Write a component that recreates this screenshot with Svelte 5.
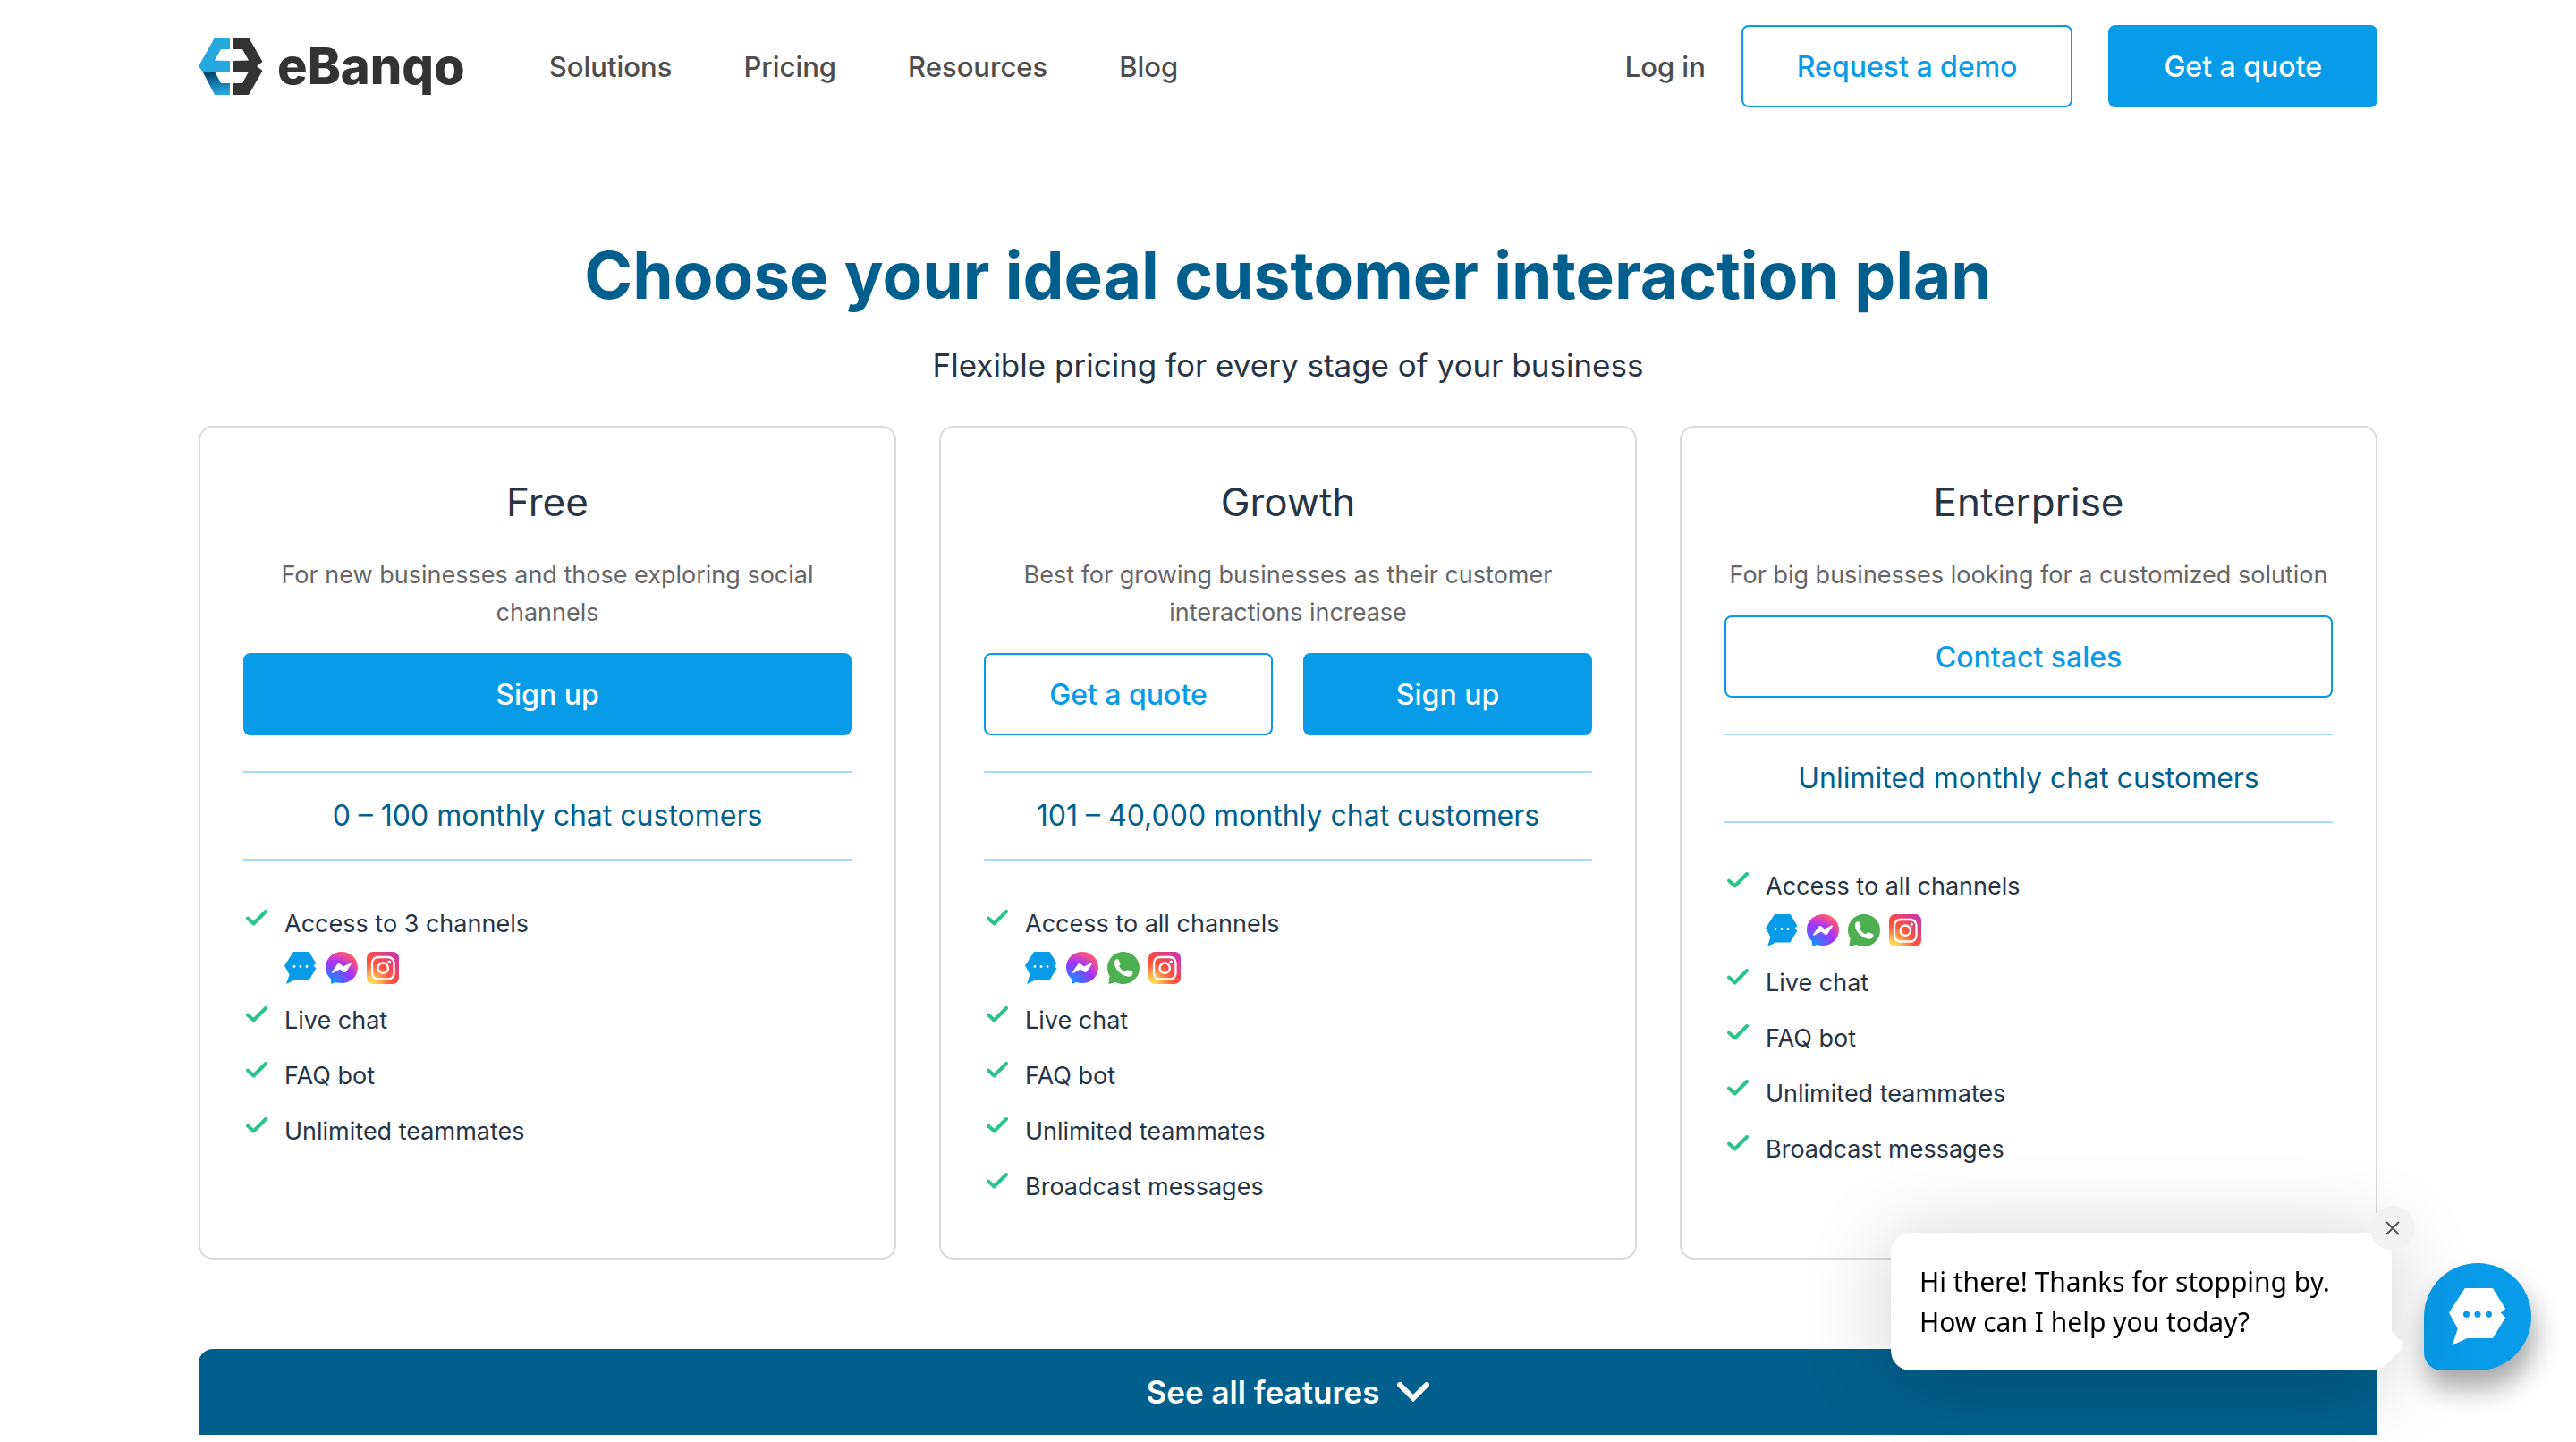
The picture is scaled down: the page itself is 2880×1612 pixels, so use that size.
<script lang="ts">
  type Channel = "chat" | "messenger" | "whatsapp" | "instagram";

  interface Action {
    label: string;
    primary: boolean;
  }

  interface Plan {
    name: string;
    summary: string;
    actions: Action[];
    customers: string;
    access: string;
    channels: Channel[];
    features: string[];
  }

  const navLinks = ["Solutions", "Pricing", "Resources", "Blog"];

  const plans: Plan[] = [
    {
      name: "Free",
      summary: "For new businesses and those exploring social channels",
      actions: [{ label: "Sign up", primary: true }],
      customers: "0 – 100 monthly chat customers",
      access: "Access to 3 channels",
      channels: ["chat", "messenger", "instagram"],
      features: ["Live chat", "FAQ bot", "Unlimited teammates"],
    },
    {
      name: "Growth",
      summary: "Best for growing businesses as their customer interactions increase",
      actions: [
        { label: "Get a quote", primary: false },
        { label: "Sign up", primary: true },
      ],
      customers: "101 – 40,000 monthly chat customers",
      access: "Access to all channels",
      channels: ["chat", "messenger", "whatsapp", "instagram"],
      features: ["Live chat", "FAQ bot", "Unlimited teammates", "Broadcast messages"],
    },
    {
      name: "Enterprise",
      summary: "For big businesses looking for a customized solution",
      actions: [{ label: "Contact sales", primary: false }],
      customers: "Unlimited monthly chat customers",
      access: "Access to all channels",
      channels: ["chat", "messenger", "whatsapp", "instagram"],
      features: ["Live chat", "FAQ bot", "Unlimited teammates", "Broadcast messages"],
    },
  ];

  let greetingOpen = $state(true);
</script>

{#snippet check()}
  <svg class="check" viewBox="0 0 24 18" aria-hidden="true">
    <path d="M2 9.5 8.5 15.5 22 2" />
  </svg>
{/snippet}

{#snippet bubble(dot: number)}
  <path
    fill="currentColor"
    d="M10 0H27.500L35.500 13 32.500 15.500 35.500 18.500 27.500 31.500H11.500L2 36 5.500 25.500 0 15.500Z"
  />
  <g class="dots">
    <circle cx="11" cy="16.500" r={dot} />
    <circle cx="18" cy="16.500" r={dot} />
    <circle cx="25" cy="16.500" r={dot} />
  </g>
{/snippet}

{#snippet channelIcon(channel: Channel)}
  <svg class="channel {channel}" viewBox="0 0 36 36" role="img" aria-label={channel}>
    {#if channel === "chat"}
      {@render bubble(1.4)}
    {:else if channel === "messenger"}
      <path
        fill="url(#messenger-fill)"
        d="M18 0C8 0 0 7.300 0 17.300c0 5.200 2.200 9.700 5.800 12.700L6.300 36l5-2c2.100.6 4.400 1 6.700 1 10 0 18-7.500 18-17.500S28 0 18 0Z"
      />
      <path
        fill="#fff"
        d="M7.200 22.500 12.800 14.200Q14.200 12.200 16.200 13.600L19.900 16.500 27.800 12.600Q29.600 12.200 28.600 14L23.300 22Q21.900 23.800 20 22.400L16 19.500 8.300 23.700Q6.500 24.200 7.200 22.500Z"
      />
    {:else if channel === "whatsapp"}
      <path
        fill="#4caf50"
        d="M18 0C8 0 0 8 0 18c0 3.400 1 6.500 2.600 9.200L1.300 36l8.200-2.100C12 35.300 14.900 36 18 36c10 0 18-8 18-18S28 0 18 0Z"
      />
      <path
        fill="#fff"
        d="M9.300 8.800Q12 7.200 13 9.500L14.400 12.700Q14.800 14 13.200 16C14.300 18.700 16.800 21.200 19.800 22.300L21.800 20.600Q22.600 20 23.700 20.500L27.500 22.100Q28.900 22.700 28.500 24.300C28 26.800 25.400 28.200 22.300 27.600 14.800 26 8.300 19 7.800 13Q7.600 10 9.300 8.800Z"
      />
    {:else}
      <rect width="36" height="36" rx="7" fill="url(#instagram-fill)" />
      <rect width="36" height="36" rx="7" fill="url(#instagram-corner)" />
      <g fill="none" stroke="#fff" stroke-width="2.300">
        <rect x="6" y="6" width="24.500" height="24.500" rx="6.500" />
        <circle cx="18.200" cy="18.200" r="5.700" />
      </g>
      <circle cx="25.300" cy="11.300" r="1.700" fill="#fff" />
    {/if}
  </svg>
{/snippet}

<!-- gradients shared by every channel icon -->
<svg class="defs" width="0" height="0" aria-hidden="true">
  <defs>
    <radialGradient id="messenger-fill" cx="0.190" cy="0.990" r="1.090">
      <stop offset="0" stop-color="#0099ff" />
      <stop offset="0.600" stop-color="#a033ff" />
      <stop offset="0.930" stop-color="#ff5280" />
      <stop offset="1" stop-color="#ff7061" />
    </radialGradient>
    <radialGradient id="instagram-fill" cx="0.120" cy="1" r="1.400">
      <stop offset="0" stop-color="#ffdd55" />
      <stop offset="0.120" stop-color="#ffd055" />
      <stop offset="0.450" stop-color="#ff543e" />
      <stop offset="0.650" stop-color="#fb4a48" />
      <stop offset="1" stop-color="#c837ab" />
    </radialGradient>
    <linearGradient id="instagram-corner" x1="0.500" y1="0.500" x2="1" y2="0">
      <stop offset="0" stop-color="#c837ab" stop-opacity="0" />
      <stop offset="1" stop-color="#c837ab" />
    </linearGradient>
  </defs>
</svg>

<header class="site-header container">
  <a class="logo" href="#home">
    <svg viewBox="0 0 72 64" aria-hidden="true">
      <defs>
        <linearGradient id="logo-fold" x1="0.300" y1="0" x2="0.500" y2="1">
          <stop offset="0" stop-color="#003f66" />
          <stop offset="1" stop-color="#25a9df" />
        </linearGradient>
      </defs>
      <path fill="#25a9df" d="M18 0H35V13H25L18 25.500 35 26V38H4.500L0 32Z" />
      <path fill="url(#logo-fold)" d="M4.500 38H18L25 51H35V64H18Z" />
      <path
        fill="#333"
        d="M39 0H56L71.500 27 65 32 71.500 37 56 64H39V51H49L56 38H39V26L56 25.500 49 13H39Z"
      />
    </svg>
    <span>eBanqo</span>
  </a>
  <nav class="nav" aria-label="Main">
    {#each navLinks as link}
      <a href="#{link.toLowerCase()}">{link}</a>
    {/each}
  </nav>
  <div class="account">
    <a class="login" href="#login">Log in</a>
    <button class="btn">Request a demo</button>
    <button class="btn primary">Get a quote</button>
  </div>
</header>

<main class="container">
  <section class="intro">
    <h1>Choose your ideal customer interaction plan</h1>
    <p>Flexible pricing for every stage of your business</p>
  </section>

  <section class="plans">
    {#each plans as plan}
      <article class="plan">
        <h2>{plan.name}</h2>
        <p class="summary">{plan.summary}</p>
        <div class="actions">
          {#each plan.actions as action}
            <button class="btn" class:primary={action.primary}>{action.label}</button>
          {/each}
        </div>
        <p class="customers">{plan.customers}</p>
        <ul>
          <li>
            {@render check()}
            <div>
              {plan.access}
              <div class="channels">
                {#each plan.channels as channel}
                  {@render channelIcon(channel)}
                {/each}
              </div>
            </div>
          </li>
          {#each plan.features as feature}
            <li>{@render check()}{feature}</li>
          {/each}
        </ul>
      </article>
    {/each}
  </section>

  <button class="see-all">
    See all features
    <svg viewBox="0 0 36 22" aria-hidden="true">
      <path d="M3 3 18 18 33 3" />
    </svg>
  </button>
</main>

<aside class="chat">
  {#if greetingOpen}
    <div class="greeting">
      Hi there! Thanks for stopping by.<br />How can I help you today?
      <button class="close" aria-label="Close" onclick={() => (greetingOpen = false)}>
        <svg viewBox="0 0 16 16" aria-hidden="true"><path d="M1 1 15 15M15 1 1 15" /></svg>
      </button>
    </div>
  {/if}
  <button class="launcher" aria-label="Open chat">
    <svg viewBox="0 0 36 36" aria-hidden="true">{@render bubble(2)}</svg>
  </button>
</aside>

<style>
  :global(body) {
    margin: 0;
    background: #fff;
    color: #263445;
    font-family: Inter, "Liberation Sans", sans-serif;
    --blue: #089be7;
    --navy: #005f8c;
  }
  h1,
  h2,
  p,
  ul {
    margin: 0;
    padding: 0;
  }
  a {
    color: inherit;
    text-decoration: none;
  }
  button {
    font-family: inherit;
    cursor: pointer;
  }
  .defs {
    position: absolute;
  }
  .container {
    margin: 0 222px;
  }

  .site-header {
    display: flex;
    align-items: center;
    padding: 28px 0;
    color: #4d4d4d;
    font-size: 31px;
    font-weight: 500;
  }
  .logo {
    display: flex;
    align-items: center;
    gap: 16px;
    margin-right: 94px;
    color: #333;
    font-size: 56px;
    font-weight: 800;
    line-height: 64px;
  }
  .logo svg {
    width: 72px;
    height: 64px;
  }
  .nav {
    display: flex;
    gap: 80px;
  }
  .account {
    display: flex;
    align-items: center;
    gap: 40px;
    margin-left: auto;
  }
  .btn {
    box-sizing: border-box;
    height: 92px;
    padding: 0 60px;
    border: 2px solid var(--blue);
    border-radius: 8px;
    background: #fff;
    color: var(--blue);
    font-size: 32px;
    font-weight: 500;
  }
  .btn.primary {
    background: var(--blue);
    color: #fff;
  }

  .intro {
    padding: 112px 0 44px;
    text-align: center;
  }
  .intro h1 {
    color: var(--navy);
    font-size: 73px;
    font-weight: 700;
    line-height: 96px;
  }
  .intro p {
    margin-top: 28px;
    font-size: 35px;
    line-height: 48px;
  }

  .plans {
    display: grid;
    grid-template-columns: repeat(3, 1fr);
    gap: 48px;
  }
  .plan {
    min-height: 832px;
    padding: 48px;
    border: 2px solid #d9d9d9;
    border-radius: 16px;
    text-align: center;
  }
  .plan h2 {
    font-size: 44px;
    font-weight: 400;
    line-height: 70px;
  }
  .summary {
    margin-top: 26px;
    color: #666;
    font-size: 27px;
    line-height: 42px;
  }
  .actions {
    display: flex;
    gap: 34px;
    margin-top: 24px;
  }
  .actions .btn {
    flex: 1;
    padding: 0;
  }
  .customers {
    margin-top: 40px;
    border: solid #a6dcfb;
    border-width: 2px 0;
    color: var(--navy);
    font-size: 32px;
    line-height: 96px;
  }
  .plan ul {
    display: flex;
    flex-direction: column;
    gap: 20px;
    margin-top: 50px;
    list-style: none;
    font-size: 27px;
    line-height: 42px;
    text-align: left;
  }
  .plan li {
    display: flex;
    gap: 19px;
  }
  .check {
    flex: none;
    width: 24px;
    height: 18px;
    margin: 5px 0 0 3px;
  }
  .check path {
    fill: none;
    stroke: #2ac48a;
    stroke-width: 4;
    stroke-linecap: round;
    stroke-linejoin: round;
  }
  .channels {
    display: flex;
    gap: 10px;
    margin-top: 10px;
  }
  .channel {
    width: 36px;
    height: 36px;
  }
  .chat.channel {
    color: var(--blue);
  }
  .dots {
    fill: #fff;
  }

  .see-all {
    display: flex;
    align-items: center;
    justify-content: center;
    gap: 20px;
    width: 100%;
    height: 96px;
    margin: 100px 0 8px;
    border: 0;
    border-radius: 16px 16px 0 0;
    background: var(--navy);
    color: #fff;
    font-size: 35px;
    font-weight: 600;
  }
  .see-all svg {
    width: 36px;
    height: 22px;
  }
  .see-all path {
    fill: none;
    stroke: #fff;
    stroke-width: 6;
    stroke-linecap: round;
  }

  aside.chat {
    position: fixed;
    right: 50px;
    bottom: 80px;
    display: flex;
    align-items: flex-end;
    gap: 36px;
  }
  .greeting {
    position: relative;
    box-sizing: border-box;
    width: 560px;
    padding: 32px;
    border-radius: 22px;
    background: #fff;
    box-shadow: 0 10px 100px rgba(0, 0, 0, 0.2);
    color: #000;
    font-family: "Noto Sans", sans-serif;
    font-size: 30px;
    line-height: 45px;
  }
  .greeting::after {
    content: "";
    position: absolute;
    right: -9px;
    bottom: 13px;
    width: 30px;
    height: 30px;
    border-radius: 7px;
    background: #fff;
    transform: rotate(45deg);
  }
  .close {
    position: absolute;
    top: -30px;
    right: -26px;
    display: grid;
    place-items: center;
    width: 50px;
    height: 50px;
    padding: 0;
    border: 0;
    border-radius: 50%;
    background: #f3f3f3;
  }
  .close svg {
    width: 16px;
    height: 16px;
  }
  .close path {
    stroke: #555;
    stroke-width: 2;
  }
  .launcher {
    display: grid;
    place-items: center;
    width: 120px;
    height: 120px;
    padding: 0;
    border: 0;
    border-radius: 50% 50% 50% 20px;
    background: var(--blue);
    box-shadow: 4px 20px 30px rgba(0, 0, 0, 0.35);
    color: #fff;
  }
  .launcher svg {
    width: 64px;
    height: 64px;
  }
  .launcher .dots {
    fill: var(--blue);
  }
</style>
